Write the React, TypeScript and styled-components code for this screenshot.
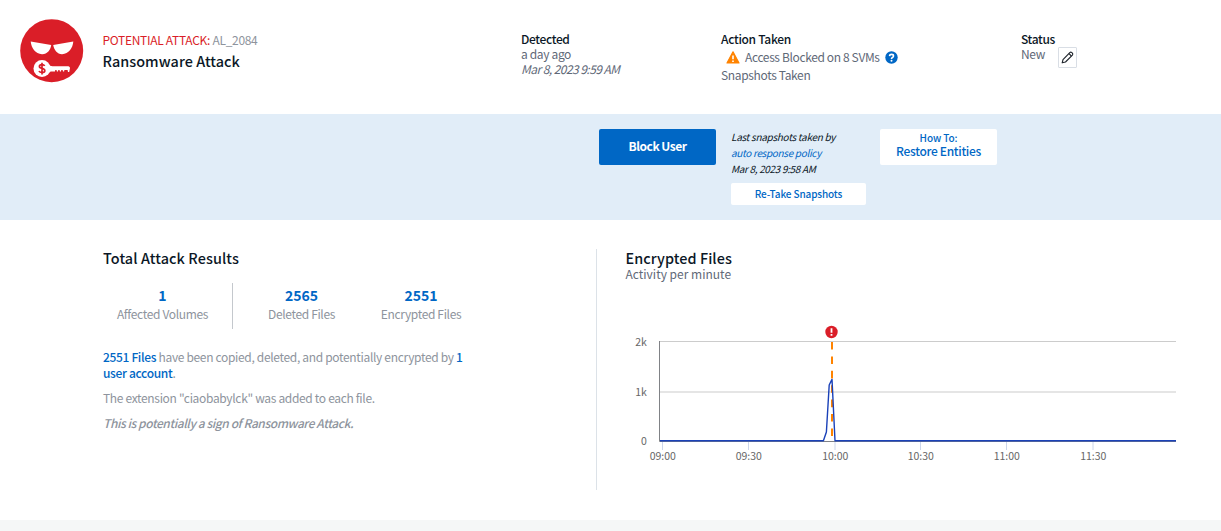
import React from "react";
import styled, { createGlobalStyle } from "styled-components";

const GlobalStyle = createGlobalStyle`
  * { box-sizing: border-box; }
  body {
    margin: 0;
    background: #fff;
    font-family: "Noto Sans CJK SC", "Open Sans", sans-serif;
    color: #5f6978;
  }
`;

const Page = styled.div`
  display: flex;
  flex-direction: column;
  height: 531px;
  overflow: hidden;
`;

const Header = styled.header`
  display: grid;
  grid-template-columns: 82.5px 418.5px 200px 300px 1fr;
  height: 114px;
  padding: 19px 0 0 20px;
`;

const TitleBlock = styled.div`
  padding-top: 10px;
`;

const Text = styled.div<{
  $size?: number;
  $line?: number;
  $color?: string;
  $weight?: number;
  $italic?: boolean;
  $spacing?: number;
}>`
  font-size: ${(p) => p.$size ?? 12}px;
  line-height: ${(p) => p.$line ?? 14}px;
  color: ${(p) => p.$color ?? "inherit"};
  font-weight: ${(p) => p.$weight ?? 400};
  font-style: ${(p) => (p.$italic ? "italic" : "normal")};
  letter-spacing: ${(p) => p.$spacing ?? -0.35}px;
  white-space: nowrap;
`;

const AlertLabel = styled.span`
  color: #da1e28;
`;

const InfoBlock = styled.div`
  padding-top: 13px;
`;

const ActionRow = styled.div`
  display: flex;
  align-items: center;
  gap: 5px;
  height: 18px;
  padding: 0 0 0 5px;
  margin-top: 2px;
`;

const StatusRow = styled.div`
  display: flex;
  gap: 13px;
`;

const EditButton = styled.button`
  display: flex;
  align-items: center;
  justify-content: center;
  width: 19px;
  height: 21px;
  margin-top: 1px;
  padding: 0;
  background: #fff;
  border: 1px solid #d9dee5;
  border-radius: 1px;
`;

const ActionBar = styled.section`
  display: flex;
  align-items: flex-start;
  height: 106px;
  padding: 15px 0 0 599px;
  background: #e1edf8;
`;

const PrimaryButton = styled.button`
  width: 117px;
  height: 36px;
  padding: 0 0 2px;
  border: 0;
  border-radius: 2px;
  background: #0067c5;
  color: #fff;
  font: 700 12px/34px "Noto Sans CJK SC", sans-serif;
  letter-spacing: -0.5px;
`;

const SnapshotInfo = styled.div`
  width: 135px;
  margin: 0 14px 0 15px;
`;

const WhiteButton = styled.button<{ $width: number; $height: number }>`
  display: flex;
  flex-direction: column;
  align-items: center;
  justify-content: center;
  width: ${(p) => p.$width}px;
  height: ${(p) => p.$height}px;
  padding: 0;
  border: 0;
  border-radius: 2px;
  background: #fff;
  color: #0067c5;
  font-family: inherit;
`;

const SnapshotButton = styled(WhiteButton)`
  margin-top: 6px;
`;

const RestoreButton = styled(WhiteButton)`
  padding-bottom: 5px;
`;

const Content = styled.main`
  display: flex;
  height: 300px;
  padding: 29px 0 0 103px;
`;

const Results = styled.section`
  width: 493px;
`;

const Stats = styled.div`
  display: flex;
  height: 46px;
  margin-top: 17px;
`;

const Stat = styled.div<{ $width: number; $divided?: boolean }>`
  display: flex;
  flex-direction: column;
  align-items: center;
  width: ${(p) => p.$width}px;
  padding: 4px ${(p) => (p.$divided ? 10 : 0)}px 0 0;
  border-right: ${(p) => (p.$divided ? "1px solid #c4c8cd" : "0")};
`;

const Paragraph = styled.p<{ $top: number; $italic?: boolean }>`
  width: 370px;
  margin: ${(p) => p.$top}px 0 0;
  font-size: 12px;
  line-height: 16px;
  color: #8e949d;
  font-style: ${(p) => (p.$italic ? "italic" : "normal")};
  font-weight: ${(p) => (p.$italic ? 500 : 400)};
  letter-spacing: ${(p) => (p.$italic ? -0.44 : -0.33)}px;
`;

const Link = styled.span`
  color: #0067c5;
  font-weight: 500;
`;

const ChartPanel = styled.section`
  height: 241px;
  padding-left: 28.5px;
  border-left: 1px solid #dce2e8;
`;

const ChartHeading = styled.div`
  display: flex;
  flex-direction: column;
  gap: 1px;
`;

const Chart = styled.svg`
  display: block;
  margin: 39px 0 0 0.5px;
`;

const AxisLabel = styled.text`
  font-size: 10.5px;
  fill: #666;
`;

const Footer = styled.footer`
  height: 11px;
  background: #f5f7f7;
`;

const AttackIcon = () => (
  <svg width="64" height="64" viewBox="0 0 64 64">
    <circle cx="31.7" cy="31.7" r="31.5" fill="#da1e28" />
    <path d="M10.7 22.6 L31.2 26 C30.7 31 27 35.4 22 35.2 C15.5 35 11.3 29 10.7 22.6Z" fill="#fff" />
    <path d="M53.3 22.6 L33.2 26 C34 31 37.5 35.4 42.2 35.2 C48.5 35 52.9 29 53.3 22.6Z" fill="#fff" />
    <circle cx="22" cy="49.6" r="8.5" fill="#fff" />
    <path
      d="M28.5 45 Q30 47.2 32.5 47.2 L48.5 47.2 Q50 47.6 50 49 L49.2 53 L48 53 L47.6 51 L44.4 51 L44.1 52.6 L43 52.6 L42.6 51 L41.3 51 L41 52.6 L39.9 52.6 L39.5 51 L38.3 51 L38 52.6 L36.9 52.6 L36.5 51 L35.3 51 L35 52.6 L31 52.6 Q29.5 52.8 28.5 54Z"
      fill="#fff"
    />
    <path
      d="M24.7 46.9 Q24 45.7 22 45.7 Q19.4 45.7 19.4 47.5 Q19.4 48.9 22 49.4 Q24.8 50 24.8 51.7 Q24.8 53.5 22 53.5 Q19.7 53.5 19 52 M22 43.8 V55.4"
      fill="none"
      stroke="#da1e28"
      strokeWidth="1.7"
    />
  </svg>
);

const WarningIcon = () => (
  <svg width="14" height="13" viewBox="0 0 14 13">
    <path d="M7 .8 L13 12 H1Z" fill="#ff8300" stroke="#ff8300" strokeWidth="1.2" strokeLinejoin="round" />
    <path d="M7 4.4 V8.2 M7 9.4 V11" stroke="#fff" strokeWidth="1.6" />
  </svg>
);

const HelpIcon = () => (
  <svg width="13" height="13" viewBox="0 0 13 13">
    <circle cx="6.5" cy="6.5" r="6.2" fill="#0067c5" />
    <path d="M4.5 5.1 Q4.6 3.4 6.5 3.4 Q8.5 3.4 8.5 5 Q8.5 5.9 7.4 6.5 Q6.5 7 6.5 7.9" fill="none" stroke="#fff" strokeWidth="1.6" />
    <circle cx="6.5" cy="9.7" r="1" fill="#fff" />
  </svg>
);

const PencilIcon = () => (
  <svg width="13" height="13" viewBox="0 0 13 13" fill="none" stroke="#20262d" strokeWidth="1.15" strokeLinejoin="round">
    <path d="M1.2 11.8 L2 8.6 L8.8 1.6 Q9.8 .8 10.8 1.6 L11.4 2.2 Q12.2 3.2 11.4 4.2 L4.5 11Z" />
    <path d="M8 2.6 L10.4 5" />
  </svg>
);

const timeTicks = [
  { x: 36.5, label: "09:00" },
  { x: 122.5, label: "09:30" },
  { x: 209, label: "10:00" },
  { x: 294.5, label: "10:30" },
  { x: 380.5, label: "11:00" },
  { x: 467, label: "11:30" },
];

const valueTicks = [
  { y: 25.5, label: "2k" },
  { y: 75.5, label: "1k" },
  { y: 124.5, label: "0" },
];

const ActivityChart = () => (
  <Chart width="560" height="150" viewBox="0 0 560 150">
    <path d="M34 21.5 H550" stroke="#ccc" />
    <path d="M34 72 H550" stroke="#e5e5e5" strokeWidth="2" />
    <path d="M33.5 21 V121.5 H550" fill="none" stroke="#808286" />
    {timeTicks.map((t) => (
      <g key={t.label}>
        <path d={`M${t.x} 122 V130`} stroke="#ccd6eb" />
        <AxisLabel x={t.x + 0.3} y={140} textAnchor="middle">{t.label}</AxisLabel>
      </g>
    ))}
    {valueTicks.map((t) => (
      <AxisLabel key={t.label} x={20.8} y={t.y} textAnchor="end">{t.label}</AxisLabel>
    ))}
    <path d="M206 22 V116" stroke="#ff8300" strokeWidth="2" strokeDasharray="7.6 6.8" />
    <path
      d="M34 120.7 H197.4 L200.4 112 L203.2 65 L206 59.4 L209 120.7 H550"
      fill="none"
      stroke="#1a41b8"
      strokeWidth="1.4"
      strokeLinejoin="round"
    />
    <circle cx="205.5" cy="12" r="6.2" fill="#da1e28" />
    <path d="M205.5 8.3 V12.8 M205.5 14 V15.8" stroke="#fff" strokeWidth="1.8" />
  </Chart>
);

export default function App() {
  return (
    <>
      <GlobalStyle />
      <Page>
        <Header>
          <AttackIcon />
          <TitleBlock>
            <Text $size={12} $line={21} $color="#8e949d" $spacing={-0.3}>
              <AlertLabel>POTENTIAL ATTACK:</AlertLabel> AL_2084
            </Text>
            <Text $size={14.4} $line={21} $color="#0b1726" $weight={500} $spacing={0.05}>Ransomware Attack</Text>
          </TitleBlock>
          <InfoBlock>
            <Text $color="#0b1726" $weight={500}>Detected</Text>
            <Text $line={15}>a day ago</Text>
            <Text $line={15} $italic $spacing={-0.55}>Mar 8, 2023 9:59 AM</Text>
          </InfoBlock>
          <InfoBlock>
            <Text $color="#0b1726" $weight={500} $spacing={-0.3}>Action Taken</Text>
            <ActionRow>
              <WarningIcon />
              <Text $spacing={-0.37}>Access Blocked on 8 SVMs</Text>
              <HelpIcon />
            </ActionRow>
            <Text $line={18}>Snapshots Taken</Text>
          </InfoBlock>
          <InfoBlock>
            <Text $color="#0b1726" $weight={500}>Status</Text>
            <StatusRow>
              <Text $line={15}>New</Text>
              <EditButton aria-label="Edit status">
                <PencilIcon />
              </EditButton>
            </StatusRow>
          </InfoBlock>
        </Header>
        <ActionBar>
          <PrimaryButton>Block User</PrimaryButton>
          <SnapshotInfo>
            <Text $size={10} $line={16} $color="#0b1726" $italic $spacing={-0.3}>Last snapshots taken by</Text>
            <Text $size={10} $line={16} $color="#0067c5" $italic $spacing={-0.33}>auto response policy</Text>
            <Text $size={10} $line={16} $color="#0b1726" $italic $spacing={-0.33}>Mar 8, 2023 9:58 AM</Text>
            <SnapshotButton $width={135} $height={22}>
              <Text $size={10} $weight={500} $spacing={-0.13}>Re-Take Snapshots</Text>
            </SnapshotButton>
          </SnapshotInfo>
          <RestoreButton $width={117} $height={36}>
            <Text $size={10} $line={13} $weight={500} $spacing={-0.1}>How To:</Text>
            <Text $size={12} $line={14} $weight={500} $spacing={-0.32}>Restore Entities</Text>
          </RestoreButton>
        </ActionBar>
        <Content>
          <Results>
            <Text $size={14.4} $line={17} $color="#0b1726" $weight={500} $spacing={0.1}>Total Attack Results</Text>
            <Stats>
              <Stat $width={130} $divided>
                <Text $size={14} $line={17} $color="#0067c5" $weight={700} $spacing={0}>1</Text>
                <Text $line={20} $color="#8e949d">Affected Volumes</Text>
              </Stat>
              <Stat $width={137}>
                <Text $size={14} $line={17} $color="#0067c5" $weight={700} $spacing={0}>2565</Text>
                <Text $line={20} $color="#8e949d">Deleted Files</Text>
              </Stat>
              <Stat $width={102}>
                <Text $size={14} $line={17} $color="#0067c5" $weight={700} $spacing={0}>2551</Text>
                <Text $line={20} $color="#8e949d">Encrypted Files</Text>
              </Stat>
            </Stats>
            <Paragraph $top={20}>
              <Link>2551 Files</Link> have been copied, deleted, and potentially encrypted by <Link>1 user account</Link>.
            </Paragraph>
            <Paragraph $top={9}>The extension "ciaobabylck" was added to each file.</Paragraph>
            <Paragraph $top={9} $italic>This is potentially a sign of Ransomware Attack.</Paragraph>
          </Results>
          <ChartPanel>
            <ChartHeading>
              <Text $size={14.4} $line={17} $color="#0b1726" $weight={500} $spacing={0.07}>Encrypted Files</Text>
              <Text $line={14} $spacing={0}>Activity per minute</Text>
            </ChartHeading>
            <ActivityChart />
          </ChartPanel>
        </Content>
        <Footer />
      </Page>
    </>
  );
}
